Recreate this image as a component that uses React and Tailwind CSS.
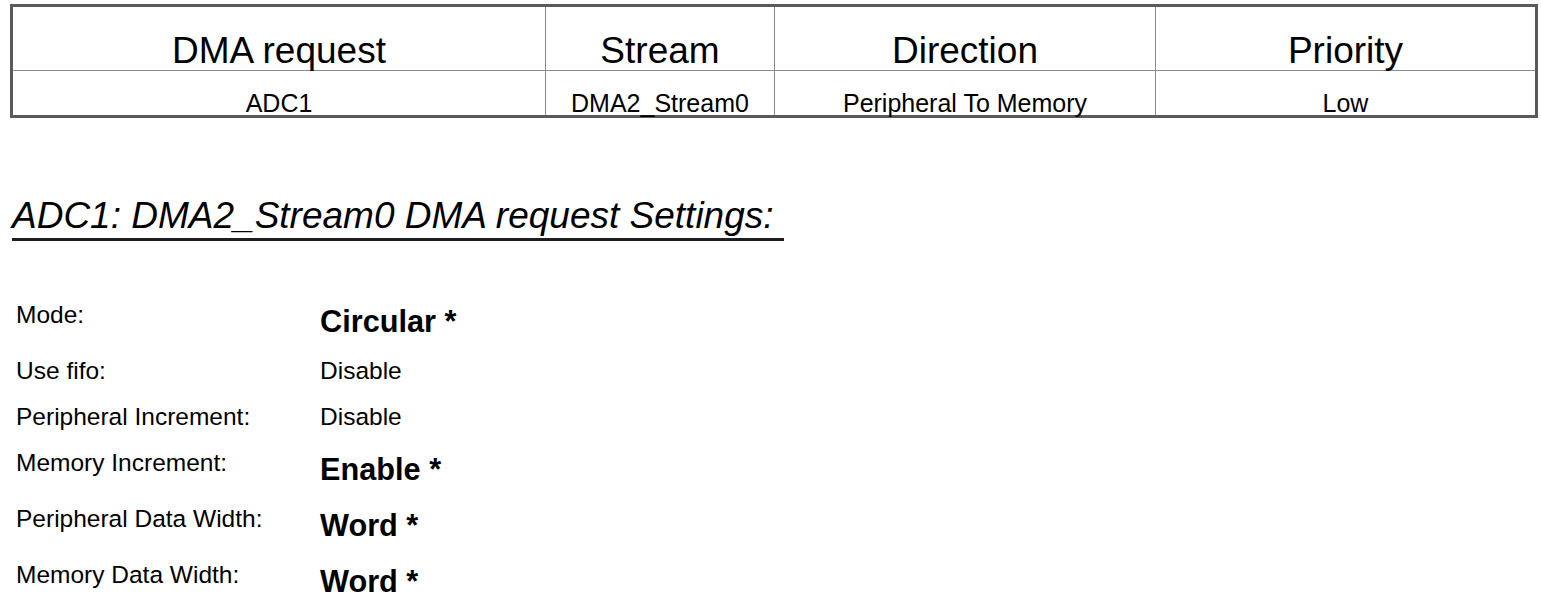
const columns = [
  { head: 'DMA request', value: 'ADC1', width: 'w-[532px]' },
  { head: 'Stream', value: 'DMA2_Stream0', width: 'w-[229px]' },
  { head: 'Direction', value: 'Peripheral To Memory', width: 'w-[381px]' },
  { head: 'Priority', value: 'Low', width: 'flex-1' },
]

const settings = [
  { label: 'Mode:', value: 'Circular *', bold: true },
  { label: 'Use fifo:', value: 'Disable' },
  { label: 'Peripheral Increment:', value: 'Disable' },
  { label: 'Memory Increment:', value: 'Enable *', bold: true },
  { label: 'Peripheral Data Width:', value: 'Word *', bold: true },
  { label: 'Memory Data Width:', value: 'Word *', bold: true },
]

export default function App() {
  return (
    <div
      className="h-screen overflow-hidden bg-white text-black"
      style={{ fontFamily: '"Liberation Sans", Arial, sans-serif' }}
    >
      <div className="ml-[10px] mt-[4px] w-[1528px] border-[3px] border-[#5a5a5a]">
        <div className="flex">
          {columns.map((c, i) => (
            <div
              key={c.head}
              className={`${c.width} h-[63px] pt-[26px] text-center text-[37px] leading-[36px] ${i > 0 ? 'border-l border-[#8a8a8a]' : ''}`}
            >
              {c.head}
            </div>
          ))}
        </div>
        <div className="flex border-t border-[#8a8a8a]">
          {columns.map((c, i) => (
            <div
              key={c.value}
              className={`${c.width} h-[44px] pt-[20px] text-center text-[25px] leading-[24px] ${i > 0 ? 'border-l border-[#8a8a8a]' : ''}`}
            >
              {c.value}
            </div>
          ))}
        </div>
      </div>

      <div className="ml-[12px] mt-[79px] w-[772px] border-b-[3px] border-[#1e1e1e] pb-[4px]">
        <h2 className="text-[37px] leading-[37px] italic font-normal">
          ADC1: DMA2_Stream0 DMA request Settings:
        </h2>
      </div>

      <div className="ml-[16px] mt-[60px]">
        {settings.map((s) => (
          <div key={s.label} className={`flex items-start ${s.bold ? 'h-[56px]' : 'h-[46px]'}`}>
            <div className="w-[304px] text-[24.5px] leading-[28px]">{s.label}</div>
            {s.bold ? (
              <div className="pt-[2px] text-[30.7px] leading-[38px] font-bold">{s.value}</div>
            ) : (
              <div className="text-[24.5px] leading-[28px]">{s.value}</div>
            )}
          </div>
        ))}
      </div>
    </div>
  )
}
